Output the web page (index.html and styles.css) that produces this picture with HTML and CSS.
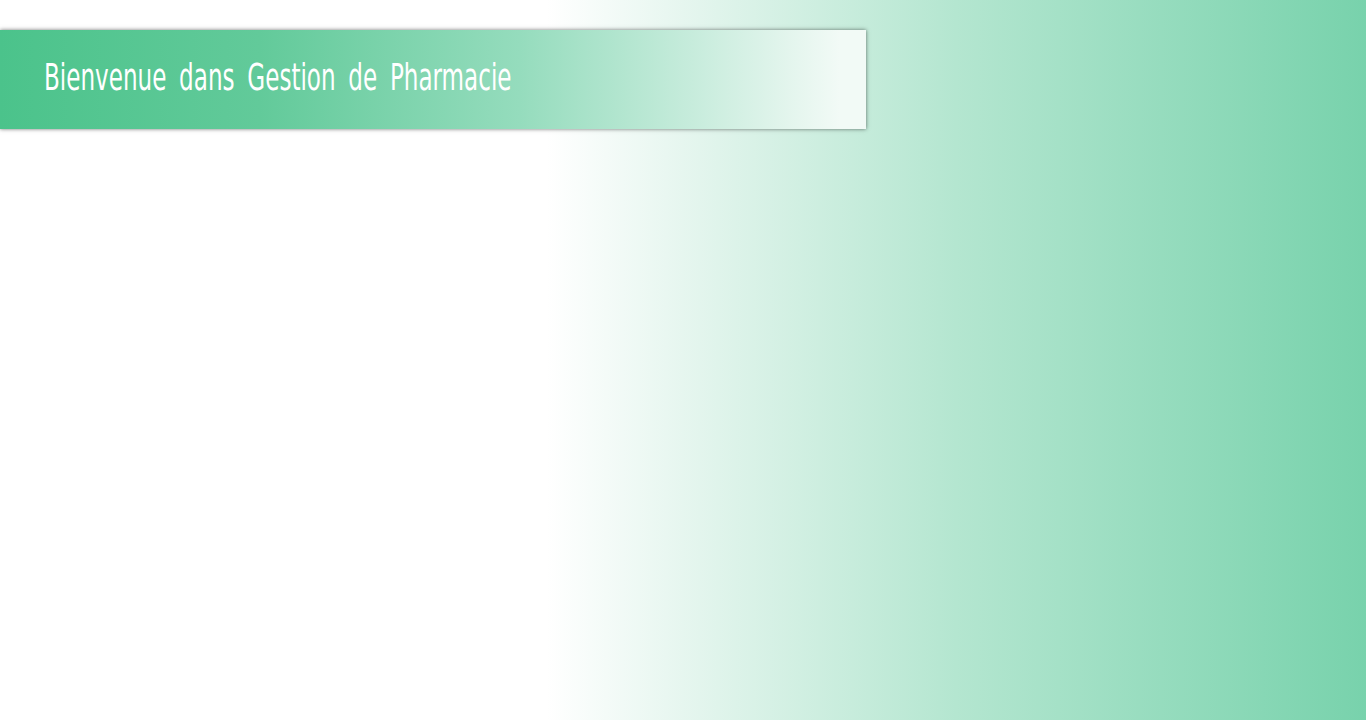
FILE: index.html
```html
<!DOCTYPE html>
<html lang="fr">
<head>
<meta charset="utf-8">
<title>Gestion de Pharmacie</title>
<link rel="stylesheet" href="styles.css">
</head>
<body>
<header class="banner">
  <h1 class="title">Bienvenue dans Gestion de Pharmacie</h1>
</header>
</body>
</html>
```

FILE: styles.css
```css
html, body {
  margin: 0;
  padding: 0;
  height: 100%;
}
body {
  background: linear-gradient(to right, #ffffff 0%, #ffffff 40%, #e6f6ef 50%, #b4e6d0 70%, #78d2ac 100%);
  padding-top: 30px;
  box-sizing: border-box;
  overflow: hidden;
}
.banner {
  width: 866px;
  height: 99px;
  background: linear-gradient(to right, #4bc38b 0%, #62ca9a 30%, #95dcbd 60%, #c7ecdc 80%, #f2faf6 97%, #f2faf6 100%);
  box-shadow: 0 0 4px rgba(0,0,0,0.55);
  display: flex;
  align-items: center;
  padding-left: 44px;
  padding-bottom: 6px;
  box-sizing: border-box;
}
.title {
  margin: 0;
  font-family: "DejaVu Sans Condensed", "DejaVu Sans", sans-serif;
  font-stretch: condensed;
  font-weight: normal;
  font-size: 38px;
  color: #ffffff;
  word-spacing: 8px;
  transform: scaleX(0.675);
  transform-origin: left center;
  white-space: nowrap;
}
```
